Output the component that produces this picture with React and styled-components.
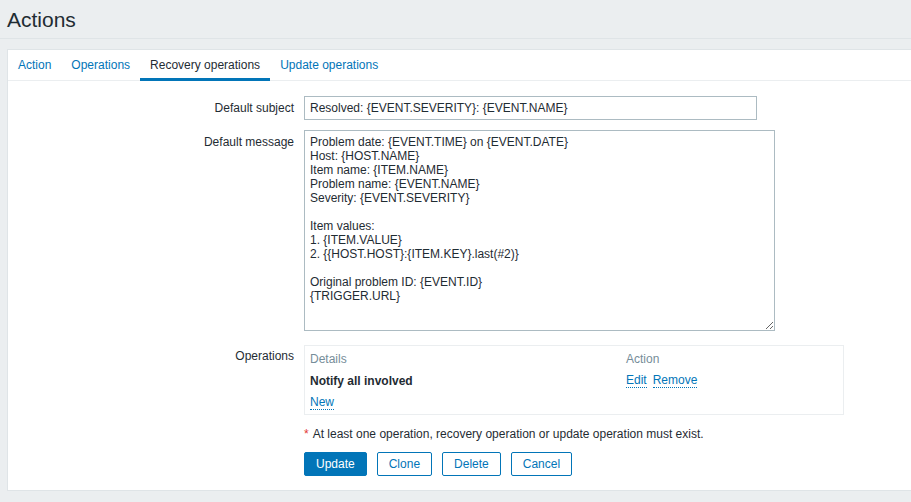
import styled, { createGlobalStyle } from 'styled-components';

const GlobalStyle = createGlobalStyle`
  html, body {
    margin: 0;
    padding: 0;
    background: #ebeef0;
    font-family: "Liberation Sans", Arial, sans-serif;
    font-size: 12px;
    color: #1f2c33;
  }
`

const Page = styled.div`
  width: 911px;
  height: 502px;
  overflow: hidden;
`

const Header = styled.header`
  height: 38px;
  margin: 0 0 10px 0;
  padding-left: 7px;
  border-bottom: 1px solid #dfe4e7;
  display: flex;
  align-items: center;
`

const Title = styled.h1`
  margin: 0;
  font-size: 21px;
  font-weight: normal;
  color: #1f2c33;
  line-height: 24px;
  position: relative;
  top: 1px;
`

const Panel = styled.div`
  margin-left: 7px;
  width: 920px;
  background: #fff;
  border: 1px solid #dfe4e7;
  border-right: none;
  height: 442px;
  box-sizing: border-box;
`

const Tabs = styled.nav`
  display: flex;
  height: 31px;
  border-bottom: 1px solid #ebeef0;
  box-sizing: border-box;
`

const Tab = styled.div`
  padding: 0 10px;
  line-height: 30px;
  height: 31px;
  box-sizing: border-box;
  color: ${p => (p.$active ? '#1f2c33' : '#0275b8')};
  border-bottom: 3px solid ${p => (p.$active ? '#0275b8' : 'transparent')};
  cursor: pointer;
`

const Form = styled.div`
  display: grid;
  grid-template-columns: 286px 1fr;
  column-gap: 10px;
  padding-top: 15px;
`

const Label = styled.div`
  text-align: right;
  line-height: 14px;
  padding-top: ${p => p.$top || 5}px;
  margin-bottom: ${p => p.$gap || 0}px;
`

const Field = styled.div`
  margin-bottom: ${p => p.$gap || 0}px;
`

const TextInput = styled.input`
  box-sizing: border-box;
  width: 453px;
  height: 24px;
  padding: 0 5px;
  border: 1px solid #acbbc2;
  font-family: inherit;
  font-size: 12px;
  color: #1f2c33;
  outline: none;
  display: block;
`

const TextArea = styled.textarea`
  box-sizing: border-box;
  display: block;
  width: 471px;
  height: 201px;
  padding: 4px 5px;
  border: 1px solid #acbbc2;
  font-family: inherit;
  font-size: 12px;
  line-height: 14px;
  color: #1f2c33;
  outline: none;
  resize: both;
  margin: 0;
`

const OpsBox = styled.div`
  box-sizing: border-box;
  width: 540px;
  border: 1px solid #ebeef0;
  padding: 1px 5px 2px;
`

const OpsRow = styled.div`
  display: grid;
  grid-template-columns: 316px 1fr;
  height: ${p => p.$h}px;
  align-items: center;
  color: ${p => (p.$head ? '#768d99' : '#1f2c33')};
  font-weight: ${p => (p.$bold ? 'bold' : 'normal')};
`

const Links = styled.div`
  display: flex;
  gap: 6px;
  font-weight: normal;
`

const DottedLink = styled.span`
  color: #0275b8;
  border-bottom: 1px dotted #0275b8;
  line-height: 14px;
  cursor: pointer;
`

const Note = styled.div`
  margin-top: 12px;
  line-height: 14px;
`

const Star = styled.span`
  color: #e33734;
  margin-right: 4px;
`

const Buttons = styled.div`
  display: flex;
  gap: 10px;
  margin-top: 11px;
`

const Button = styled.button`
  height: 24px;
  padding: 0 11px;
  box-sizing: border-box;
  border-radius: 2px;
  border: 1px solid #0275b8;
  background: ${p => (p.$primary ? '#0275b8' : '#fff')};
  color: ${p => (p.$primary ? '#fff' : '#0275b8')};
  font-family: inherit;
  font-size: 12px;
  cursor: pointer;
`

const message = `Problem date: {EVENT.TIME} on {EVENT.DATE}
Host: {HOST.NAME}
Item name: {ITEM.NAME}
Problem name: {EVENT.NAME}
Severity: {EVENT.SEVERITY}

Item values:
1. {ITEM.VALUE}
2. {{HOST.HOST}:{ITEM.KEY}.last(#2)}

Original problem ID: {EVENT.ID}
{TRIGGER.URL}`

const tabs = ['Action', 'Operations', 'Recovery operations', 'Update operations']

const App = () => {
  return (
    <Page>
      <GlobalStyle />
      <Header>
        <Title>Actions</Title>
      </Header>
      <Panel>
        <Tabs>
          {tabs.map(t => (
            <Tab key={t} $active={t === 'Recovery operations'}>{t}</Tab>
          ))}
        </Tabs>
        <Form>
          <Label $gap={10}>Default subject</Label>
          <Field $gap={10}>
            <TextInput defaultValue="Resolved: {EVENT.SEVERITY}: {EVENT.NAME}" />
          </Field>

          <Label $gap={14}>Default message</Label>
          <Field $gap={14}>
            <TextArea defaultValue={message} />
          </Field>

          <Label $top={4}>Operations</Label>
          <Field>
            <OpsBox>
              <OpsRow $head $h={23}>
                <span>Details</span>
                <span>Action</span>
              </OpsRow>
              <OpsRow $bold $h={21}>
                <span>Notify all involved</span>
                <Links>
                  <DottedLink>Edit</DottedLink>
                  <DottedLink>Remove</DottedLink>
                </Links>
              </OpsRow>
              <OpsRow $h={21}>
                <span><DottedLink>New</DottedLink></span>
              </OpsRow>
            </OpsBox>
            <Note>
              <Star>*</Star>At least one operation, recovery operation or update operation must exist.
            </Note>
            <Buttons>
              <Button $primary>Update</Button>
              <Button>Clone</Button>
              <Button>Delete</Button>
              <Button>Cancel</Button>
            </Buttons>
          </Field>
        </Form>
      </Panel>
    </Page>
  )
}

export default App;
